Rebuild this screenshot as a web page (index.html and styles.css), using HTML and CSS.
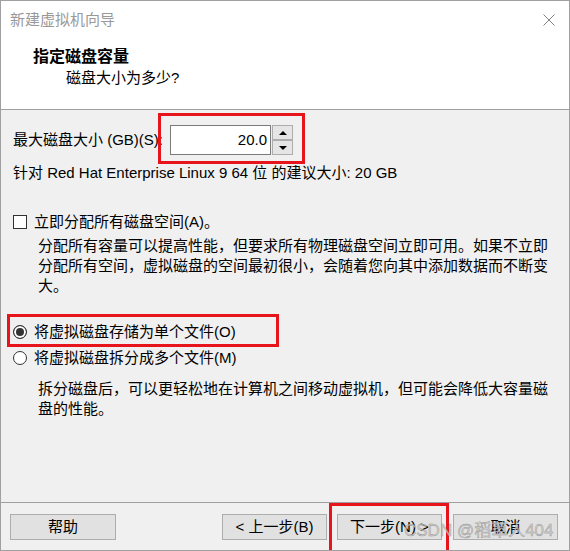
FILE: index.html
```
<!DOCTYPE html>
<html lang="zh-CN">
<head>
<meta charset="utf-8">
<title>新建虚拟机向导</title>
<link rel="stylesheet" href="styles.css">
</head>
<body>
<div class="window">
  <header class="header">
    <div class="titlebar">
      <span class="title">新建虚拟机向导</span>
      <svg class="close" width="12" height="12" viewBox="0 0 12 12" aria-label="关闭"><path d="M0.5 0.5 L11.5 11.5 M11.5 0.5 L0.5 11.5" stroke="#808080" stroke-width="1" fill="none"/></svg>
    </div>
    <div class="heading">指定磁盘容量</div>
    <div class="subheading">磁盘大小为多少?</div>
  </header>
  <main class="content">
    <div class="size-row">
      <label class="size-label">最大磁盘大小 (GB)(S):</label>
      <div class="spin">
        <div class="spin-field">20.0</div>
        <div class="spin-buttons">
          <div class="spin-btn"><span class="tri-up"></span></div>
          <div class="spin-btn"><span class="tri-down"></span></div>
        </div>
      </div>
    </div>
    <p class="recommend">针对 Red Hat Enterprise Linux 9 64 位 的建议大小: 20 GB</p>
    <div class="option option-check"><span class="checkbox"></span><span>立即分配所有磁盘空间(A)。</span></div>
    <p class="desc desc-alloc">分配所有容量可以提高性能，但要求所有物理磁盘空间立即可用。如果不立即分配所有空间，虚拟磁盘的空间最初很小，会随着您向其中添加数据而不断变大。</p>
    <div class="option option-single"><span class="radio checked"></span><span>将虚拟磁盘存储为单个文件(O)</span></div>
    <div class="option option-split"><span class="radio"></span><span>将虚拟磁盘拆分成多个文件(M)</span></div>
    <p class="desc desc-split">拆分磁盘后，可以更轻松地在计算机之间移动虚拟机，但可能会降低大容量磁盘的性能。</p>
  </main>
  <footer class="footer">
    <button class="btn">帮助</button>
    <div class="nav">
      <button class="btn">&lt; 上一步(B)</button>
      <button class="btn">下一步(N) &gt;</button>
      <button class="btn btn-cancel">取消</button>
    </div>
  </footer>
  <div class="mark mark-size"></div>
  <div class="mark mark-single"></div>
  <div class="mark mark-next"></div>
  <div class="watermark">CSDN @稻草人404</div>
</div>
</body>
</html>
```

FILE: styles.css
```
* { box-sizing: border-box; }
html, body { margin: 0; padding: 0; }
body {
  width: 570px;
  height: 551px;
  overflow: hidden;
  background: #f0f0f0;
  font-family: "Liberation Sans", "Noto Sans CJK SC", sans-serif;
  font-size: 15px;
  color: #000;
}
.window {
  position: relative;
  width: 570px;
  height: 551px;
  border: 1px solid #a0a0a0;
  display: flex;
  flex-direction: column;
  background: #f0f0f0;
  overflow: hidden;
}
.header {
  background: #fff;
  height: 109px;
  flex: none;
  border-bottom: 1px solid #a0a0a0;
  padding: 9px 0 0 9px;
}
.titlebar {
  display: flex;
  align-items: center;
  justify-content: space-between;
  height: 20px;
  line-height: 20px;
  padding-right: 14px;
}
.title { color: #999; }
.close { display: block; }
.heading {
  font-weight: bold;
  font-size: 16px;
  line-height: 20px;
  margin: 17px 0 0 23px;
}
.subheading {
  line-height: 20px;
  margin: 1px 0 0 56px;
}
.content {
  flex: 1;
  padding: 15px 20px 0 12px;
}
.size-row {
  display: flex;
  align-items: center;
  height: 30px;
}
.size-label {
  width: 151px;
  margin-right: 6px;
  line-height: 20px;
  white-space: nowrap;
}
.spin { display: flex; height: 30px; }
.spin-field {
  width: 101px;
  height: 30px;
  border: 1px solid #7a7a7a;
  background: #fff;
  text-align: right;
  padding-right: 3px;
  line-height: 28px;
}
.spin-buttons {
  display: flex;
  flex-direction: column;
  width: 21px;
  margin-left: 1px;
}
.spin-btn {
  height: 15px;
  border: 1px solid #adadad;
  background: #e5e5e5;
  display: flex;
  align-items: center;
  justify-content: center;
}
.tri-up {
  width: 0; height: 0;
  border-left: 4px solid transparent;
  border-right: 4px solid transparent;
  border-bottom: 4px solid #000;
}
.tri-down {
  width: 0; height: 0;
  border-left: 4px solid transparent;
  border-right: 4px solid transparent;
  border-top: 4px solid #000;
}
.recommend {
  margin: 8px 0 0;
  line-height: 20px;
  white-space: nowrap;
}
.option {
  display: flex;
  align-items: center;
  height: 20px;
  line-height: 20px;
  white-space: nowrap;
}
.option-check { margin-top: 29px; }
.option-single { margin-top: 26px; }
.option-split { margin-top: 6px; }
.checkbox {
  width: 14px;
  height: 14px;
  border: 1px solid #333;
  background: #fff;
  margin-right: 7px;
  flex: none;
}
.radio {
  width: 14px;
  height: 14px;
  border-radius: 50%;
  border: 1px solid #333;
  background: #fff;
  margin-right: 7px;
  flex: none;
}
.radio.checked {
  background: #333;
  box-shadow: inset 0 0 0 2px #fff;
}
.desc {
  margin: 4px 0 0 25px;
  line-height: 20px;
}
.desc-split { margin-top: 11px; }
.footer {
  flex: none;
  height: 48px;
  border-top: 1px solid #a0a0a0;
  display: flex;
  justify-content: space-between;
  align-items: flex-start;
  padding: 11px 11px 0 9px;
}
.btn {
  height: 26px;
  width: 106px;
  border: 1px solid #adadad;
  background: #e1e1e1;
  font: inherit;
  line-height: 24px;
  padding: 0;
  color: #000;
  border-radius: 0;
}
.nav { display: flex; gap: 10px; }
.nav .btn { width: 105px; }
.btn-cancel { margin-left: 1px; }
.mark {
  position: absolute;
  border: 3px solid #e8141c;
}
.mark-size { left: 157px; top: 112px; width: 147px; height: 51px; }
.mark-single { left: 6px; top: 313px; width: 272px; height: 33px; }
.mark-next { left: 328px; top: 502px; width: 120px; height: 60px; }
.watermark {
  position: absolute;
  left: 403px;
  top: 519px;
  font-size: 17px;
  line-height: 22px;
  color: rgba(205, 205, 205, 0.85);
  -webkit-text-stroke: 0.4px rgba(110, 110, 110, 0.7);
  white-space: nowrap;
}
```
